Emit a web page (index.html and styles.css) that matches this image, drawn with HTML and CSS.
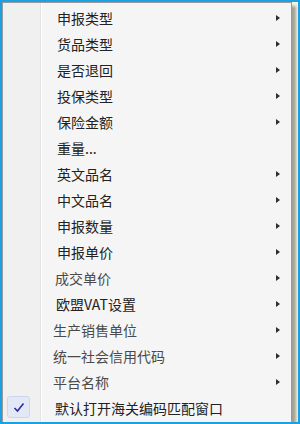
FILE: index.html
```html
<!DOCTYPE html>
<html lang="zh-CN">
<head>
  <meta charset="UTF-8">
  <title>右键菜单</title>
  <link rel="stylesheet" href="styles.css">
</head>
<body>
  <div class="frame">
    <ul class="menu">
      <li class="item"><span class="label">申报类型</span><span class="arrow"></span></li>
      <li class="item"><span class="label">货品类型</span><span class="arrow"></span></li>
      <li class="item"><span class="label">是否退回</span><span class="arrow"></span></li>
      <li class="item"><span class="label">投保类型</span><span class="arrow"></span></li>
      <li class="item"><span class="label">保险金额</span><span class="arrow"></span></li>
      <li class="item"><span class="label">重量...</span></li>
      <li class="item"><span class="label">英文品名</span><span class="arrow"></span></li>
      <li class="item"><span class="label">中文品名</span><span class="arrow"></span></li>
      <li class="item"><span class="label">申报数量</span><span class="arrow"></span></li>
      <li class="item"><span class="label">申报单价</span><span class="arrow"></span></li>
      <li class="item soft shift-2"><span class="label">成交单价</span><span class="arrow"></span></li>
      <li class="item shift-1"><span class="label">欧盟VAT设置</span><span class="arrow"></span></li>
      <li class="item soft shift-4"><span class="label">生产销售单位</span><span class="arrow"></span></li>
      <li class="item soft shift-4"><span class="label">统一社会信用代码</span><span class="arrow"></span></li>
      <li class="item soft shift-4"><span class="label">平台名称</span><span class="arrow"></span></li>
      <li class="item checked shift-2">
        <span class="check">
          <svg width="12" height="11" viewBox="0 0 12 11"><path d="M1.5 6 L4.5 9 L10.5 1.5" fill="none" stroke="#2b2ba6" stroke-width="1.6"/></svg>
        </span>
        <span class="label">默认打开海关编码匹配窗口</span>
      </li>
    </ul>
  </div>
</body>
</html>
```

FILE: styles.css
```css
html, body {
  margin: 0;
  padding: 0;
}

body {
  width: 300px;
  height: 424px;
  overflow: hidden;
  font-family: "Noto Sans CJK SC", "Microsoft YaHei", sans-serif;
}

.frame {
  box-sizing: border-box;
  width: 300px;
  height: 424px;
  border: 2px solid #1ba1e2;
  background: #f6f6e3;
  overflow: hidden;
}

/* 菜单本体 */
.menu {
  list-style: none;
  margin: 0;
  padding: 2px 0 4px;
  width: 288px;
  border: 1px solid #9a9a9a;
  background: linear-gradient(to right, #f0f0f0 0, #f0f0f0 37px, #e2e3e3 37px, #e2e3e3 38px, #ffffff 38px, #ffffff 39px, #f5f5f5 39px);
  box-shadow: 4px 4px 3px rgba(0, 0, 0, 0.35);
}

.item {
  display: flex;
  align-items: center;
  height: 26px;
  padding-left: 54px;
  padding-right: 11px;
  font-size: 14px;
  color: #222;
}

.item.soft {
  color: #4a4a4a;
}

.shift-1 { padding-left: 53px; }
.shift-2 { padding-left: 52px; }
.shift-4 { padding-left: 50px; }

.label {
  flex: 1;
  white-space: nowrap;
  line-height: 26px;
}

/* 子菜单箭头 */
.arrow {
  width: 0;
  height: 0;
  border-top: 3.5px solid transparent;
  border-bottom: 3.5px solid transparent;
  border-left: 4px solid #2e2e2e;
}

.checked {
  position: relative;
}

.check {
  position: absolute;
  left: 4px;
  top: 1px;
  width: 21px;
  height: 20px;
  border: 1px solid #cdd6ee;
  border-radius: 3px;
  background: #e3e8f7;
  display: flex;
  align-items: center;
  justify-content: center;
}
```
